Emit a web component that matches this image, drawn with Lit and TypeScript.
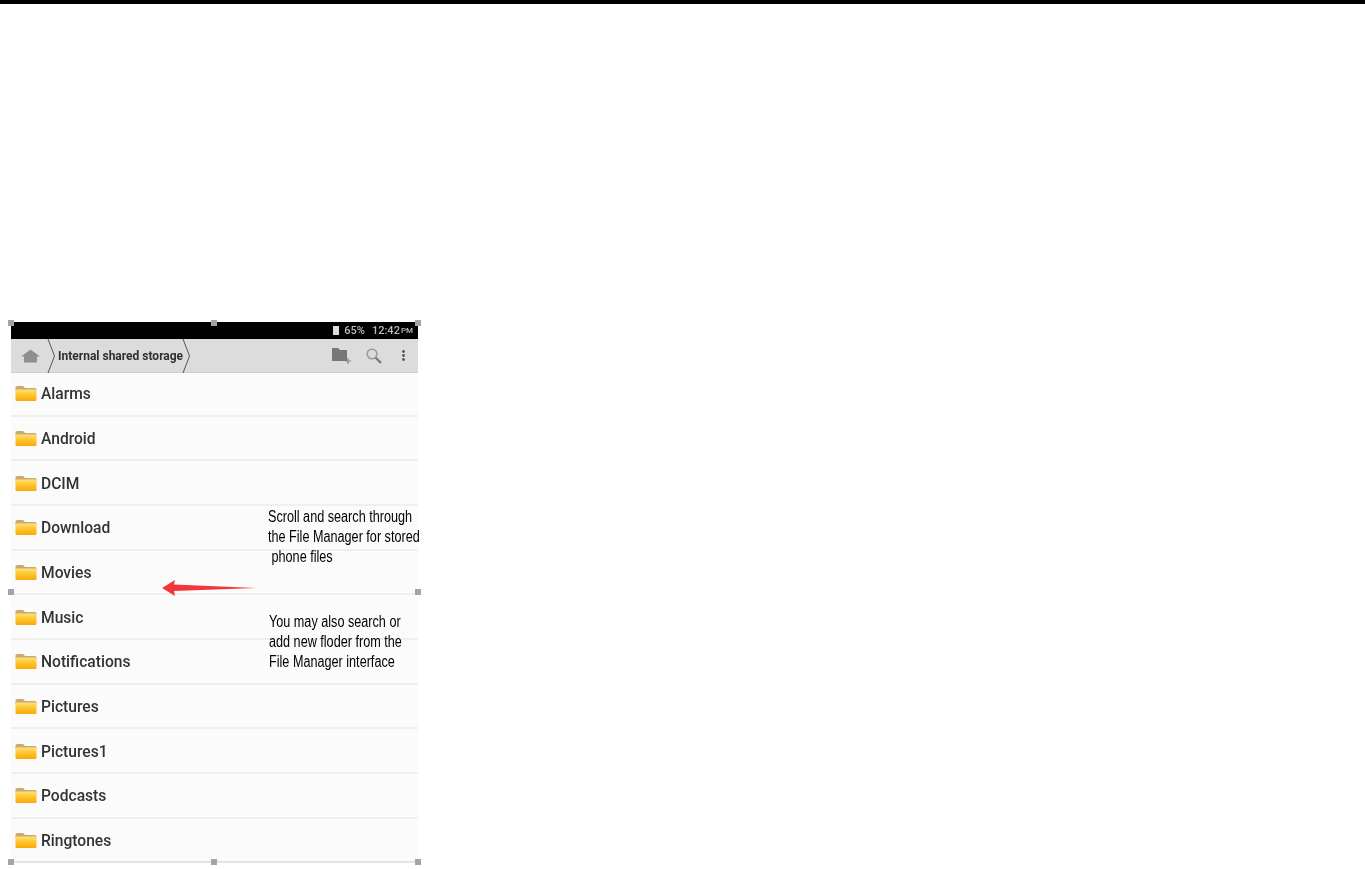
import { LitElement, html, css, svg } from "lit";
import { customElement } from "lit/decorators.js";

const FOLDERS = ["Alarms","Android","DCIM","Download","Movies","Music","Notifications","Pictures","Pictures1","Podcasts","Ringtones"];
const HANDLES = ["tl","tm","tr","ml","mr","bl","bm","br"];

const folderIcon = svg`<svg class="folder" viewBox="0 0 22 16" width="22" height="16">
  <defs><linearGradient id="fg" x1="0" y1="0" x2="0" y2="1">
    <stop offset="0" stop-color="#fee27a"/><stop offset="0.45" stop-color="#fec52e"/><stop offset="1" stop-color="#f9a90c"/>
  </linearGradient></defs>
  <path d="M0.5 2.5Q0.5 1 2 1H8L10 3H20Q21.5 3 21.5 4.5V6H0.5Z" fill="#c9ab72"/>
  <rect x="0.5" y="4.5" width="21" height="11.5" rx="1.2" fill="url(#fg)"/>
</svg>`;

@customElement("app-root")
export class AppRoot extends LitElement {
  static styles = css`
    :host { display: block; width: 1365px; height: 869px; overflow: hidden; background: #fff; font-family: Roboto, "Liberation Sans", sans-serif; }
    .topbar { height: 4px; background: #000; }
    .figure { position: relative; width: 407px; height: 540px; margin: 318px 0 0 11px; }
    .shot { display: flex; flex-direction: column; height: 100%; filter: blur(0.5px); }
    .status { height: 17px; background: #000; color: #bdbdbd; display: flex; align-items: center; justify-content: flex-end; padding-right: 5px; font-size: 11px; font-weight: 500; flex: none; }
    .batt { width: 6px; height: 9px; background: #ddd; margin-right: 5px; }
    .time { margin-left: 7px; }
    .pm { font-size: 8px; margin-left: 1px; }
    .toolbar { height: 34px; flex: none; background: #dcdcdc; border-bottom: 1px solid #cfcfcf; display: flex; align-items: center; box-sizing: border-box; }
    .home { margin-left: 10px; }
    .crumb { margin-left: 7px; }
    .crumb-text { font-size: 12px; font-weight: 700; color: #2f2f2f; margin-left: 3px; white-space: nowrap; width: 124px; }
    .crumb2 { margin-left: 0; }
    .actions { margin-left: auto; display: flex; align-items: center; padding-right: 13px; }
    .act-search { margin-left: 13px; margin-right: 2px; }
    .act-more { margin-left: 17px; }
    .list { flex: 1; background: #fbfbfb; display: flex; flex-direction: column; }
    .row { height: 44.7px; flex: none; box-sizing: border-box; border-bottom: 2px solid #efefef; padding-top: 2px; display: flex; align-items: center; padding-left: 4px; color: #333; font-size: 15.6px; font-weight: 500; }
    .row:first-child { height: 43.6px; padding-top: 0; }
    .row:last-child { border-bottom-color: #e4e4e4; }
    .folder { flex: none; margin-right: 4px; margin-top: -2px; }
    .note { position: absolute; font-family: "Liberation Sans", sans-serif; font-size: 16px; line-height: 20px; color: #000; white-space: pre; transform: scaleX(0.79); transform-origin: left top; }
    .note1 { left: 257px; top: 185px; }
    .note2 { left: 258px; top: 290px; }
    .arrow { position: absolute; left: 150px; top: 256px; }
    .handle { position: absolute; width: 6px; height: 6px; background: #a3a3ab; }
    .tl { left: -3px; top: -2px; } .tm { left: 200px; top: -2px; } .tr { left: 404px; top: -2px; }
    .ml { left: -3px; top: 267px; } .mr { left: 404px; top: 267px; }
    .bl { left: -3px; top: 537px; } .bm { left: 200px; top: 537px; } .br { left: 404px; top: 537px; }
  `;

  render() {
    return html`
      <div class="topbar"></div>
      <div class="figure">
        <div class="shot">
          <div class="status">
            <span class="batt"></span><span>65%</span><span class="time">12:42</span><span class="pm">PM</span>
          </div>
          <div class="toolbar">
            <svg class="home" width="19" height="14" viewBox="0 0 19 14">
              <path d="M9.5 0.5L19 7.5H16V13.5H3V7.5H0Z" fill="#8f8f8f"/>
            </svg>
            <svg class="crumb" width="8" height="34" viewBox="0 0 8 34">
              <path d="M1 0L7.5 17L1 34" fill="none" stroke="#555" stroke-width="1"/>
            </svg>
            <span class="crumb-text">Internal shared storage</span>
            <svg class="crumb2" width="8" height="34" viewBox="0 0 8 34">
              <path d="M1 0L7.5 17L1 34" fill="none" stroke="#555" stroke-width="1"/>
            </svg>
            <div class="actions">
              <svg width="20" height="18" viewBox="0 0 20 18">
                <path d="M0 1H6L8 3H15V14H0Z" fill="#777"/>
                <path d="M16 11V17M13 14H19" stroke="#888" stroke-width="1.2" fill="none"/>
              </svg>
              <svg class="act-search" width="18" height="16" viewBox="0 0 18 16">
                <circle cx="7" cy="6" r="4.8" fill="none" stroke="#9a9a9a" stroke-width="1.6"/>
                <path d="M10.5 9.5L16 15" stroke="#777" stroke-width="2.2"/>
              </svg>
              <svg class="act-more" width="3" height="11" viewBox="0 0 3 11">
                <circle cx="1.5" cy="1.5" r="1.4" fill="#555"/>
                <circle cx="1.5" cy="5.5" r="1.4" fill="#555"/>
                <circle cx="1.5" cy="9.5" r="1.4" fill="#555"/>
              </svg>
            </div>
          </div>
          <div class="list">
            ${FOLDERS.map((name) => html`<div class="row">${folderIcon}<span>${name}</span></div>`)}
          </div>
        </div>
        <div class="note note1">Scroll and search through
the File Manager for stored
 phone files</div>
        <div class="note note2">You may also search or
add new floder from the
File Manager interface</div>
        <svg class="arrow" width="97" height="18" viewBox="0 0 97 18">
          <path d="M1 10L14 2L13 6.5L95 10L13 13L14 18Z" fill="#f0383c"/>
        </svg>
        ${HANDLES.map((h) => html`<span class="handle ${h}"></span>`)}
      </div>
    `;
  }
}
